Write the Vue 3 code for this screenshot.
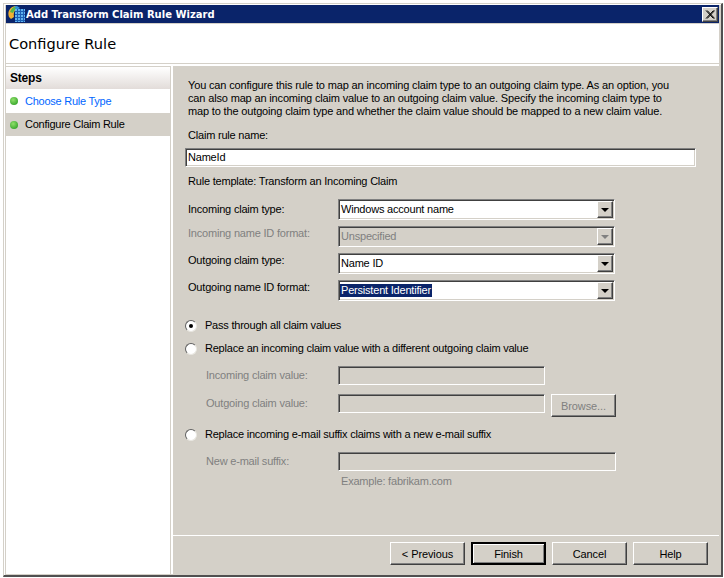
<template>
  <div class="screen">
    <div class="frame">
      <div class="inner">
        <div class="titlebar">
          <svg class="app-icon" width="18" height="18" viewBox="0 0 18 18">
            <path d="M1 12C-1 7 2 2 7 1l4 2C7 4 5 7 6 12l-3 2z" fill="#f2b233" />
            <path d="M2 7c1-3 3-5 6-6l3 2C8 4 6 5 5 8z" fill="#58b848" />
            <path d="M6 2l3-1 3 2-3 1.500z" fill="#2f8fe0" />
            <rect x="7" y="4" width="10" height="13" fill="#5fb2ee" />
            <path d="M9.500 4v13M12.500 4v13M15.500 4v13M7 6.500h10M7 9.500h10M7 12.500h10M7 15.500h10" stroke="#1c5fb4" stroke-width="1" />
          </svg>
          <span class="title-text">Add Transform Claim Rule Wizard</span>
          <button class="close-btn">
            <svg width="10" height="9" viewBox="0 0 10 9">
              <path d="M1 0.5l7.5 8M2.2 0.5l7.5 8M8.5 0.5l-7.5 8M9.7 0.5l-7.5 8" stroke="#000" stroke-width="1" fill="none" />
            </svg>
          </button>
        </div>

        <div class="header">
          <h1>Configure Rule</h1>
        </div>

        <div class="main">
          <div class="steps">
            <div class="steps-head">Steps</div>
            <div
              v-for="step in steps"
              :key="step.name"
              class="step"
              :class="{ current: step.current }"
            >
              <span class="dot"></span>
              <span :class="{ link: !step.current }">{{ step.name }}</span>
            </div>
          </div>

          <div class="panel">
            <div class="content">
              <p class="desc">
                You can configure this rule to map an incoming claim type to an outgoing claim type. As an option, you<br />
                can also map an incoming claim value to an outgoing claim value. Specify the incoming claim type to<br />
                map to the outgoing claim type and whether the claim value should be mapped to a new claim value.
              </p>

              <div class="lbl rule-name">Claim rule name:</div>
              <div class="field rule-input"><span class="val">NameId</span></div>
              <div class="lbl rule-template">Rule template: Transform an Incoming Claim</div>

              <div class="combos">
                <div v-for="c in combos" :key="c.label" class="combo-row">
                  <div class="lbl combo-label" :class="{ off: c.off, first: c.first }">{{ c.label }}</div>
                  <div class="field combo" :class="{ disabled: c.off }">
                    <span class="val" :class="{ selected: c.selected, off: c.off }">{{ c.value }}</span>
                    <span class="arrow"><i></i></span>
                  </div>
                </div>
              </div>

              <div class="radio-row first-radio">
                <span class="radio checked"></span>
                <span>Pass through all claim values</span>
              </div>
              <div class="radio-row second-radio">
                <span class="radio"></span>
                <span>Replace an incoming claim value with a different outgoing claim value</span>
              </div>

              <div class="sub-row sub-one">
                <div class="lbl sub-label off">Incoming claim value:</div>
                <div class="field sub-input disabled"></div>
              </div>
              <div class="sub-row sub-two">
                <div class="lbl sub-label off">Outgoing claim value:</div>
                <div class="field sub-input disabled"></div>
                <button class="btn browse">Browse...</button>
              </div>

              <div class="radio-row third-radio">
                <span class="radio"></span>
                <span>Replace incoming e-mail suffix claims with a new e-mail suffix</span>
              </div>

              <div class="sub-row sub-three">
                <div class="lbl sub-label off">New e-mail suffix:</div>
                <div class="field suffix-input disabled"></div>
              </div>
              <div class="example">Example: fabrikam.com</div>
            </div>

            <div class="footer">
              <button class="btn">&lt; Previous</button>
              <button class="btn default">Finish</button>
              <button class="btn">Cancel</button>
              <button class="btn">Help</button>
            </div>
          </div>
        </div>
      </div>
    </div>
  </div>
</template>

<script setup>
const steps = [
  { name: 'Choose Rule Type', current: false },
  { name: 'Configure Claim Rule', current: true },
]

const combos = [
  { label: 'Incoming claim type:', value: 'Windows account name', first: true },
  { label: 'Incoming name ID format:', value: 'Unspecified', off: true },
  { label: 'Outgoing claim type:', value: 'Name ID' },
  { label: 'Outgoing name ID format:', value: 'Persistent Identifier', selected: true },
]
</script>

<style>
html,
body {
  margin: 0;
  background: #fff;
  overflow: hidden;
}
</style>

<style scoped>
.screen {
  width: 724px;
  height: 578px;
  padding: 3px 0 0 3px;
  box-sizing: border-box;
  background: #fff;
  font-family: "Liberation Sans", Arial, sans-serif;
  font-size: 11px;
  line-height: 13px;
  letter-spacing: -0.2px;
  color: #000;
}

.frame {
  width: 720px;
  height: 574px;
  box-sizing: border-box;
  border-left: 1px solid #d4d0c8;
  border-top: 1px solid #d4d0c8;
  border-right: 2px solid #505050;
  border-bottom: 2px solid #505050;
  padding: 1px 0 0 1px;
}

.inner {
  height: 100%;
  box-sizing: border-box;
  border-left: 1px solid #d4d0c8;
  border-right: 2px solid #d4d0c8;
  border-bottom: 1px solid #d4d0c8;
  display: flex;
  flex-direction: column;
}

.titlebar {
  height: 18px;
  flex: none;
  background: #0a246a;
  color: #fff;
  display: flex;
  align-items: center;
  padding: 0 1px 0 2px;
  border-bottom: 1px solid #d4d0c8;
}

.app-icon {
  flex: none;
}

.title-text {
  font-family: "DejaVu Sans", sans-serif;
  font-weight: 700;
  font-size: 10px;
  letter-spacing: 0;
  flex: 1;
}

.close-btn {
  width: 16px;
  height: 15px;
  padding: 0;
  background: #d4d0c8;
  border: 1px solid;
  border-color: #fff #404040 #404040 #fff;
  box-shadow: inset -1px -1px 0 #808080;
  display: flex;
  align-items: center;
  justify-content: center;
}

.header {
  height: 39px;
  flex: none;
  background: #fff;
  display: flex;
  align-items: center;
  padding-left: 3px;
  border-bottom: 1px solid #d4d0c8;
}

.header h1 {
  margin: 0;
  font-family: "DejaVu Sans", sans-serif;
  font-size: 14.6px;
  font-weight: 400;
  letter-spacing: 0;
}

.main {
  flex: 1;
  display: flex;
  background: #fff;
  padding-top: 2px;
  min-height: 0;
}

.steps {
  width: 165px;
  flex: none;
  box-sizing: border-box;
  border-top: 1px solid #d4d0c8;
  border-right: 1px solid #d4d0c8;
  margin-right: 2px;
}

.steps-head {
  height: 22px;
  line-height: 22px;
  padding-left: 4px;
  font-weight: 700;
  font-size: 12px;
  background: linear-gradient(#fff, #e2dcd9);
}

.step {
  height: 24px;
  display: flex;
  align-items: center;
  padding-left: 4px;
  letter-spacing: -0.25px;
}

.step.current {
  height: 23px;
  background: #d4d0c8;
}

.link {
  color: #0066ff;
}

.dot {
  width: 8px;
  height: 8px;
  border-radius: 50%;
  margin-right: 7px;
  background: radial-gradient(circle at 40% 35%, #8fe06a, #3aa82e 75%);
  flex: none;
}

.panel {
  flex: 1;
  background: #d4d0c8;
  display: flex;
  flex-direction: column;
  min-width: 0;
}

.content {
  flex: 1;
  padding: 13px 0 0 12px;
}

.desc {
  margin: 0 0 0 3px;
  white-space: nowrap;
  letter-spacing: -0.155px;
}

.lbl {
  margin-left: 3px;
  white-space: nowrap;
}

.off {
  color: #808080;
}

.rule-name {
  margin-top: 11px;
}

.field {
  box-sizing: border-box;
  background: #fff;
  border: 1px solid;
  border-color: #808080 #fff #fff #808080;
  box-shadow: inset 1px 1px 0 #404040, inset -1px -1px 0 #d4d0c8;
  padding: 1px;
  display: flex;
  align-items: center;
}

.field.disabled {
  background: #d4d0c8;
}

.val {
  padding: 0 1px;
  line-height: 13px;
}

.rule-input {
  width: 511px;
  height: 19px;
  margin-top: 6px;
}

.rule-template {
  margin-top: 8px;
}

.combos {
  margin-top: 11px;
  display: flex;
  flex-direction: column;
  gap: 6px;
}

.combo-row {
  display: flex;
  align-items: flex-start;
}

.combo-label {
  width: 150px;
  padding-top: 1px;
}

.combo-label.first {
  padding-top: 4px;
}

.combo {
  width: 277px;
  height: 21px;
  justify-content: space-between;
}

.selected {
  background: #0a246a;
  color: #fff;
}

.arrow {
  width: 16px;
  height: 17px;
  box-sizing: border-box;
  background: #d4d0c8;
  border: 1px solid;
  border-color: #fff #404040 #404040 #fff;
  box-shadow: inset -1px -1px 0 #808080;
  display: flex;
  align-items: center;
  justify-content: center;
}

.arrow i {
  width: 0;
  height: 0;
  border-left: 4px solid transparent;
  border-right: 4px solid transparent;
  border-top: 4px solid #000;
}

.combo.disabled .arrow i {
  border-top-color: #808080;
}

.radio-row {
  display: flex;
  align-items: center;
  height: 13px;
  letter-spacing: -0.22px;
}

.radio {
  width: 12px;
  height: 12px;
  box-sizing: border-box;
  margin-right: 8px;
  border-radius: 50%;
  background: #fff;
  border: 1px solid;
  border-color: #606060 #e8e6e0 #e8e6e0 #606060;
  flex: none;
  display: flex;
  align-items: center;
  justify-content: center;
}

.radio.checked::after {
  content: "";
  width: 4px;
  height: 4px;
  border-radius: 50%;
  background: #000;
}

.first-radio {
  margin-top: 18px;
}

.second-radio {
  margin-top: 10px;
}

.third-radio {
  margin-top: 11px;
}

.sub-row {
  display: flex;
  align-items: flex-start;
}

.sub-label {
  width: 132px;
  margin-left: 21px;
  padding-top: 3px;
}

.sub-input {
  width: 207px;
  height: 19px;
}

.sub-one {
  margin-top: 11px;
}

.sub-two {
  margin-top: 9px;
}

.sub-three {
  margin-top: 11px;
}

.suffix-input {
  width: 278px;
  height: 19px;
}

.example {
  margin: 4px 0 0 156px;
  color: #808080;
}

.btn {
  width: 75px;
  height: 23px;
  padding: 0;
  box-sizing: border-box;
  background: #d4d0c8;
  border: 1px solid;
  border-color: #fff #404040 #404040 #fff;
  box-shadow: inset -1px -1px 0 #808080;
  font-family: inherit;
  font-size: 11px;
  letter-spacing: -0.1px;
  color: #000;
}

.btn.default {
  border: 2px solid #000;
  box-shadow: inset 1px 1px 0 #fff, inset -1px -1px 0 #808080;
}

.browse {
  width: 65px;
  margin-left: 6px;
  color: #808080;
}

.footer {
  flex: none;
  height: 39px;
  box-sizing: border-box;
  border-top: 1px solid #fff;
  display: flex;
  justify-content: flex-end;
  gap: 6px;
  padding: 6px 11px 0 0;
}
</style>
